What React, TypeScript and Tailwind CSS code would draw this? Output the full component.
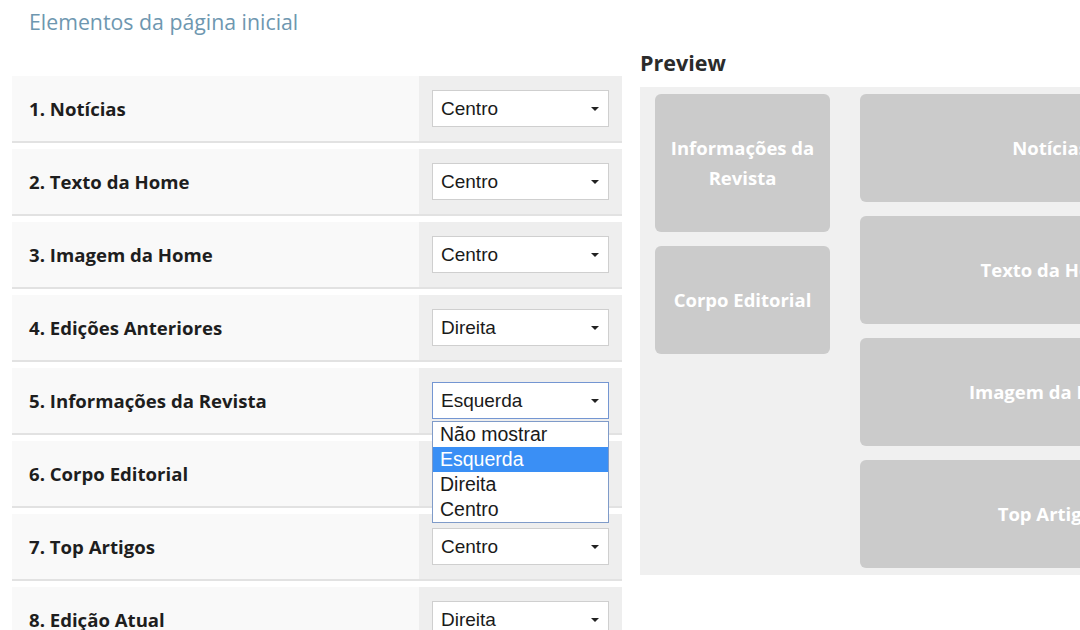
import React from 'react';

const rows = [
  { label: '1. Notícias', value: 'Centro' },
  { label: '2. Texto da Home', value: 'Centro' },
  { label: '3. Imagem da Home', value: 'Centro' },
  { label: '4. Edições Anteriores', value: 'Direita' },
  { label: '5. Informações da Revista', value: 'Esquerda', open: true },
  { label: '6. Corpo Editorial', value: 'Esquerda' },
  { label: '7. Top Artigos', value: 'Centro' },
  { label: '8. Edição Atual', value: 'Direita' },
];

const options = ['Não mostrar', 'Esquerda', 'Direita', 'Centro'];

function FakeSelect({ value, open }: { value: string; open?: boolean }) {
  return (
    <div className="relative">
      <div
        className={
          'flex h-[37px] w-[177px] items-center justify-between bg-white pl-[8px] pr-[9px] border ' +
          (open ? 'border-[#7496d2]' : 'border-[#cfcfcf]')
        }
      >
        <span className="text-[19px] leading-none text-[#1a1a1a]">{value}</span>
        <svg width="8" height="4" viewBox="0 0 8 4">
          <polygon points="0,0 8,0 4,4" fill="#222" />
        </svg>
      </div>
      {open && (
        <div className="absolute left-0 top-[39px] z-10 w-[177px] border border-[#7f9bc9] bg-white">
          {options.map((o) => (
            <div
              key={o}
              className={
                'h-[25px] pl-[7px] text-[19.5px] leading-[25px] ' +
                (o === value ? 'bg-[#3a8ff5] text-white' : 'text-[#1a1a1a]')
              }
            >
              {o}
            </div>
          ))}
        </div>
      )}
    </div>
  );
}

function Card({ children, className = '' }: { children: React.ReactNode; className?: string }) {
  return (
    <div
      className={
        'rounded-[6px] bg-[#cbcbcb] px-[8px] py-[39px] text-center text-[18.5px] font-bold leading-[30px] text-white ' +
        className
      }
    >
      {children}
    </div>
  );
}

export default function App() {
  return (
    <div
      className="h-[630px] w-[1080px] overflow-hidden bg-white"
      style={{ fontFamily: '"Open Sans", "Liberation Sans", sans-serif' }}
    >
      <h1 className="pl-[29px] pt-[8px] text-[21.3px] font-normal leading-[28px] text-[#6e97b0]">
        Elementos da página inicial
      </h1>

      <div className="mt-[14px] flex gap-[18px] pl-[12px]">
        {/* Left: element list */}
        <div className="w-[610px] shrink-0 pt-[26px]">
          {rows.map((r) => (
            <div key={r.label} className="mb-[6px] flex border-b-2 border-[#e2e2e2]">
              <div className="flex h-[65px] flex-1 items-center bg-[#f9f9f9] pl-[17px] text-[18.6px] font-bold text-[#1e1e1e]">
                {r.label}
              </div>
              <div
                className="flex h-[65px] w-[203px] items-center bg-[#eeeeee] pl-[13px]"
                style={{ fontFamily: '"Liberation Sans", Arial, sans-serif' }}
              >
                <FakeSelect value={r.value} open={r.open} />
              </div>
            </div>
          ))}
        </div>

        {/* Right: preview */}
        <div className="shrink-0">
          <h2 className="h-[37px] text-[21.5px] font-bold leading-[26px] text-[#2b2b2b]">Preview</h2>
          <div className="flex w-[615px] gap-[30px] bg-[#f0f0f0] px-[15px] py-[7px]">
            <div className="flex w-[175px] shrink-0 flex-col gap-[14px] self-start">
              <Card>Informações da Revista</Card>
              <Card>Corpo Editorial</Card>
            </div>
            <div className="flex w-[380px] shrink-0 flex-col gap-[14px]">
              <Card>Notícias</Card>
              <Card>Texto da Home</Card>
              <Card>Imagem da Home</Card>
              <Card>Top Artigos</Card>
            </div>
          </div>
        </div>
      </div>
    </div>
  );
}
